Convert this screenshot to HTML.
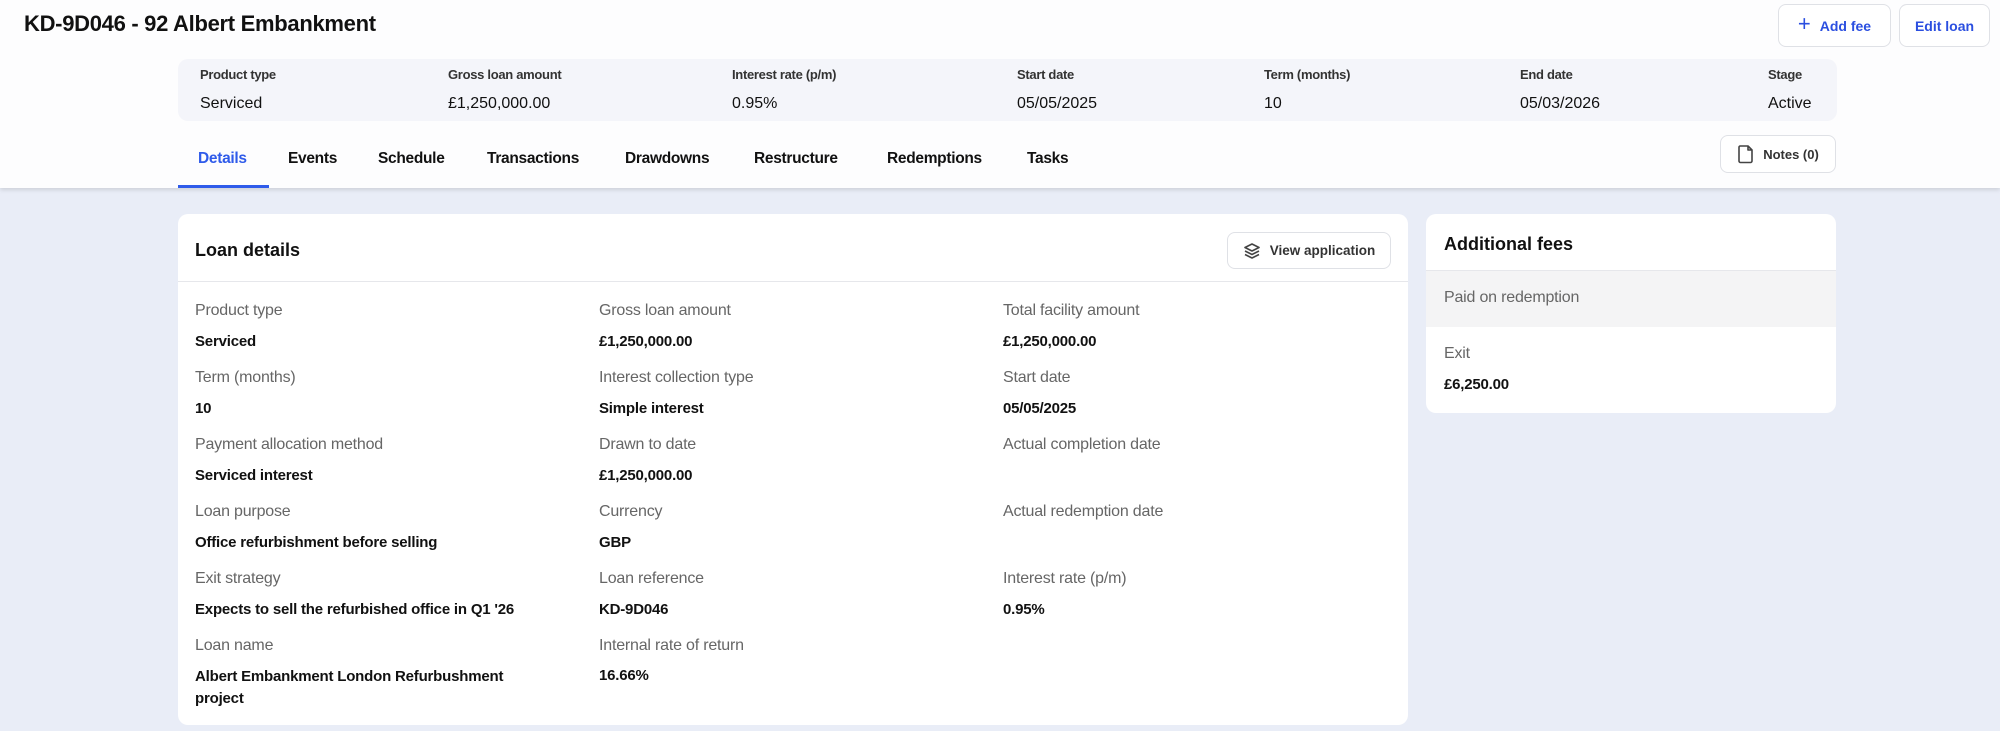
<!DOCTYPE html>
<html><head><meta charset="utf-8"><style>
*{margin:0;padding:0;box-sizing:border-box}
body{width:2000px;height:731px;overflow:hidden;background:#e9edf7;font-family:"Liberation Sans",Arial,sans-serif;color:#111;position:relative}
.a{position:absolute;white-space:nowrap}
.hdr{position:absolute;left:0;top:0;width:2000px;height:188px;background:#fdfdfe;box-shadow:0 2px 4px rgba(0,0,0,.12)}
.btn{position:absolute;border:1px solid #dfe1e6;border-radius:8px;background:#fff;display:flex;align-items:center;justify-content:center;font-size:14px;font-weight:bold}
.sl{font-size:13px;color:#333;font-weight:bold;letter-spacing:-.3px}
.sv{font-size:16px;color:#111}
.tab{font-size:15.5px;font-weight:bold;color:#111;top:150px;letter-spacing:-.3px}
.card{position:absolute;background:#fff;border-radius:10px}
.l{font-size:16px;color:#666;letter-spacing:-.2px}
.v{font-size:15px;font-weight:bold;color:#111;letter-spacing:-.2px}
</style></head><body>
<div class="hdr"></div>
<div class="a" style="left:24px;top:11px;font-size:22px;font-weight:bold;letter-spacing:-.3px">KD-9D046 - 92 Albert Embankment</div>
<div class="btn" style="left:1778px;top:4px;width:113px;height:43px;color:#2b4fe0"><span style="font-size:22px;font-weight:normal;margin-right:9px;margin-top:-3px">+</span>Add fee</div>
<div class="btn" style="left:1899px;top:4px;width:91px;height:43px;color:#2b4fe0">Edit loan</div>
<div style="position:absolute;left:178px;top:59px;width:1659px;height:62px;background:#f4f5fa;border-radius:10px"></div>
<div class="a sl" style="left:200px;top:67px">Product type</div><div class="a sv" style="left:200px;top:95px">Serviced</div>
<div class="a sl" style="left:448px;top:67px">Gross loan amount</div><div class="a sv" style="left:448px;top:95px">£1,250,000.00</div>
<div class="a sl" style="left:732px;top:67px">Interest rate (p/m)</div><div class="a sv" style="left:732px;top:95px">0.95%</div>
<div class="a sl" style="left:1017px;top:67px">Start date</div><div class="a sv" style="left:1017px;top:95px">05/05/2025</div>
<div class="a sl" style="left:1264px;top:67px">Term (months)</div><div class="a sv" style="left:1264px;top:95px">10</div>
<div class="a sl" style="left:1520px;top:67px">End date</div><div class="a sv" style="left:1520px;top:95px">05/03/2026</div>
<div class="a sl" style="left:1768px;top:67px">Stage</div><div class="a sv" style="left:1768px;top:95px">Active</div>
<div class="a tab" style="left:198px;color:#2f5bea">Details</div>
<div style="position:absolute;left:178px;top:185px;width:91px;height:3px;background:#2f5bea"></div>
<div class="a tab" style="left:288px">Events</div>
<div class="a tab" style="left:378px">Schedule</div>
<div class="a tab" style="left:487px">Transactions</div>
<div class="a tab" style="left:625px">Drawdowns</div>
<div class="a tab" style="left:754px">Restructure</div>
<div class="a tab" style="left:887px">Redemptions</div>
<div class="a tab" style="left:1027px">Tasks</div>
<div class="btn" style="left:1720px;top:135px;width:116px;height:38px;color:#333;font-size:13px"><svg width="18" height="20" viewBox="0 0 18 20" style="margin-right:8px"><path d="M3 2h8l4 4v11a1.5 1.5 0 0 1-1.5 1.5h-10A1.5 1.5 0 0 1 2 17V3.5A1.5 1.5 0 0 1 3 2z M11 2v4h4" fill="none" stroke="#444" stroke-width="1.6" stroke-linejoin="round"/></svg>Notes (0)</div>

<div class="card" style="left:178px;top:214px;width:1230px;height:511px"></div>
<div class="a" style="left:195px;top:240px;font-size:18px;font-weight:bold">Loan details</div>
<div style="position:absolute;left:178px;top:281px;width:1230px;height:1px;background:#e6e7eb"></div>
<div class="btn" style="left:1227px;top:232px;width:164px;height:37px;color:#333;font-size:13.5px"><svg width="18" height="18" viewBox="0 0 18 18" style="margin-right:9px"><path d="M9 2L2 5.5 9 9l7-3.5z M2 9l7 3.5L16 9 M2 12.5L9 16l7-3.5" fill="none" stroke="#444" stroke-width="1.6" stroke-linejoin="round"/></svg>View application</div>

<div class="a l" style="left:195px;top:302px">Product type</div><div class="a v" style="left:195px;top:333px">Serviced</div>
<div class="a l" style="left:599px;top:302px">Gross loan amount</div><div class="a v" style="left:599px;top:333px">£1,250,000.00</div>
<div class="a l" style="left:1003px;top:302px">Total facility amount</div><div class="a v" style="left:1003px;top:333px">£1,250,000.00</div>

<div class="a l" style="left:195px;top:369px">Term (months)</div><div class="a v" style="left:195px;top:400px">10</div>
<div class="a l" style="left:599px;top:369px">Interest collection type</div><div class="a v" style="left:599px;top:400px">Simple interest</div>
<div class="a l" style="left:1003px;top:369px">Start date</div><div class="a v" style="left:1003px;top:400px">05/05/2025</div>

<div class="a l" style="left:195px;top:436px">Payment allocation method</div><div class="a v" style="left:195px;top:467px">Serviced interest</div>
<div class="a l" style="left:599px;top:436px">Drawn to date</div><div class="a v" style="left:599px;top:467px">£1,250,000.00</div>
<div class="a l" style="left:1003px;top:436px">Actual completion date</div>

<div class="a l" style="left:195px;top:503px">Loan purpose</div><div class="a v" style="left:195px;top:534px">Office refurbishment before selling</div>
<div class="a l" style="left:599px;top:503px">Currency</div><div class="a v" style="left:599px;top:534px">GBP</div>
<div class="a l" style="left:1003px;top:503px">Actual redemption date</div>

<div class="a l" style="left:195px;top:570px">Exit strategy</div><div class="a v" style="left:195px;top:601px">Expects to sell the refurbished office in Q1 '26</div>
<div class="a l" style="left:599px;top:570px">Loan reference</div><div class="a v" style="left:599px;top:601px">KD-9D046</div>
<div class="a l" style="left:1003px;top:570px">Interest rate (p/m)</div><div class="a v" style="left:1003px;top:601px">0.95%</div>

<div class="a l" style="left:195px;top:637px">Loan name</div><div class="a v" style="left:195px;top:666px;line-height:22px">Albert Embankment London Refurbushment<br>project</div>
<div class="a l" style="left:599px;top:637px">Internal rate of return</div><div class="a v" style="left:599px;top:667px">16.66%</div>

<div class="card" style="left:1426px;top:214px;width:410px;height:199px;overflow:hidden">
<div style="position:absolute;left:0;top:56px;width:410px;height:57px;background:#f4f4f5;border-top:1px solid #e6e7eb"></div>
</div>
<div class="a" style="left:1444px;top:234px;font-size:18px;font-weight:bold">Additional fees</div>
<div class="a l" style="left:1444px;top:289px;font-size:16px">Paid on redemption</div>
<div class="a l" style="left:1444px;top:345px">Exit</div>
<div class="a v" style="left:1444px;top:376px">£6,250.00</div>
</body></html>
